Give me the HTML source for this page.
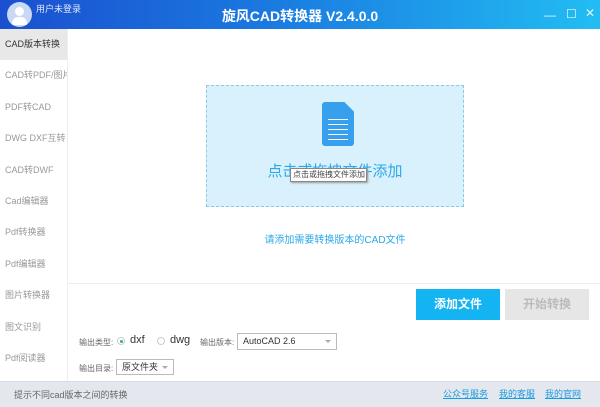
<!DOCTYPE html>
<html><head><meta charset="utf-8"><style>
*{margin:0;padding:0;box-sizing:border-box}
body{width:600px;height:407px;overflow:hidden;font-family:"Liberation Sans","Noto Sans CJK SC",sans-serif;background:#fff;position:relative;font-size:9px;color:#555}
.title{position:absolute;left:0;top:0;width:600px;height:29px;background:linear-gradient(90deg,#1b4fcf 0%,#1a7ae0 45%,#22bdf3 100%)}
.av{position:absolute;left:7px;top:2px;width:25px;height:25px;border-radius:50%;background:#c9d8f5}
.av:after{content:"";position:absolute;left:8px;top:5px;width:9px;height:9px;border-radius:50%;background:#fff}
.av:before{content:"";position:absolute;left:5px;top:15px;width:15px;height:8px;border-radius:8px 8px 2px 2px;background:#fff}
.user{position:absolute;left:36px;top:2px;color:#dfe9ff;font-size:9px}
.tt{position:absolute;left:0;width:600px;top:6px;text-align:center;color:#fff;font-weight:bold;font-size:14px}
.wc{position:absolute;top:8px;color:#e6f6ff;font-size:12px}
.side{position:absolute;left:0;top:29px;width:68px;height:352px;background:#fff;border-right:1px solid #eee}
.side div{height:31.4px;line-height:31.4px;padding-left:5px;font-size:9px;color:#999;white-space:nowrap;overflow:hidden}
.side div.a{background:#e8e8e8;color:#333}
.drop{position:absolute;left:206px;top:85px;width:258px;height:122px;background:#d9f1fd;border:1px dashed #8ec9e0}
.doc{position:absolute;left:115px;top:16px;width:32px;height:44px;background:#36a0ef;border-radius:3px;clip-path:polygon(0 0,70% 0,100% 22%,100% 100%,0 100%)}
.doc i{position:absolute;left:6px;width:20px;height:1.2px;background:#fff}
.dt{position:absolute;left:0;width:100%;top:74px;text-align:center;color:#2aa8e8;font-size:15px}
.tip{position:absolute;left:290px;top:168px;width:77px;height:14px;background:#fff;border:1px solid #888;box-shadow:1px 1px 2px #999;font-size:8px;color:#444;line-height:12px;padding-left:2px}
.hint{position:absolute;left:206px;width:258px;top:231px;text-align:center;color:#2aa8e8;font-size:10px}
.line{position:absolute;left:68px;top:283px;width:532px;height:1px;background:#eee}
.btn{position:absolute;top:289px;height:31px;width:84px;text-align:center;line-height:31px;font-size:12px;font-weight:bold}
.bot{position:absolute;left:0;top:381px;width:600px;height:26px;background:#e4e8ee;border-top:1px solid #d8dde4}
.lk{position:absolute;top:387px;color:#1a9ae0;text-decoration:underline;font-size:9px}
.sel{position:absolute;background:#fff;border:1px solid #bbb;font-size:9px;color:#333;padding-left:5px;line-height:14px}
.sel:after{content:"";position:absolute;right:5px;top:6px;border:3px solid transparent;border-top:3px solid #aaa}
.lb{position:absolute;font-size:8px;color:#666;white-space:nowrap}
</style></head><body>
<div class="title"></div>
<div class="av"></div>
<div class="user">用户未登录</div>
<div class="tt">旋风CAD转换器 V2.4.0.0</div>
<div class="wc" style="left:544px">—</div><div class="wc" style="left:566px;top:7px">☐</div><div class="wc" style="left:585px;top:6px">✕</div>
<div class="side">
<div class="a">CAD版本转换</div><div>CAD转PDF/图片</div><div>PDF转CAD</div><div>DWG DXF互转</div><div>CAD转DWF</div><div>Cad编辑器</div><div>Pdf转换器</div><div>Pdf编辑器</div><div>图片转换器</div><div>图文识别</div><div>Pdf阅读器</div>
</div>
<div class="drop"><div class="doc"><i style="top:17px"></i><i style="top:22px"></i><i style="top:27px"></i><i style="top:32px"></i><i style="top:37px"></i></div><div class="dt">点击或拖拽文件添加</div></div>
<div class="tip">点击或拖拽文件添加</div>
<div class="hint">请添加需要转换版本的CAD文件</div>
<div class="line"></div>
<div class="btn" style="left:416px;background:#14b4f2;color:#fff">添加文件</div>
<div class="btn" style="left:505px;background:#e6e6e6;color:#bbb">开始转换</div>
<div class="lb" style="left:79px;top:337px">输出类型:</div>
<div style="position:absolute;left:117px;top:337px;width:8px;height:8px;border-radius:50%;border:1px solid #ccc"><div style="margin:1.5px;width:3px;height:3px;border-radius:50%;background:#2bb673"></div></div>
<div style="position:absolute;left:130px;top:334px;font-size:11px;color:#333">dxf</div>
<div style="position:absolute;left:157px;top:337px;width:8px;height:8px;border-radius:50%;border:1px solid #ccc"></div>
<div style="position:absolute;left:170px;top:334px;font-size:11px;color:#333">dwg</div>
<div class="lb" style="left:200px;top:337px">输出版本:</div>
<div class="sel" style="left:237px;top:333px;width:100px;height:17px">AutoCAD 2.6</div>
<div class="lb" style="left:79px;top:363px">输出目录:</div>
<div class="sel" style="left:116px;top:359px;width:58px;height:16px">原文件夹</div>
<div class="bot"></div>
<div style="position:absolute;left:14px;top:388px;color:#666">提示不同cad版本之间的转换</div>
<div class="lk" style="left:443px">公众号服务</div><div class="lk" style="left:499px">我的客服</div><div class="lk" style="left:545px">我的官网</div>
</body></html>
